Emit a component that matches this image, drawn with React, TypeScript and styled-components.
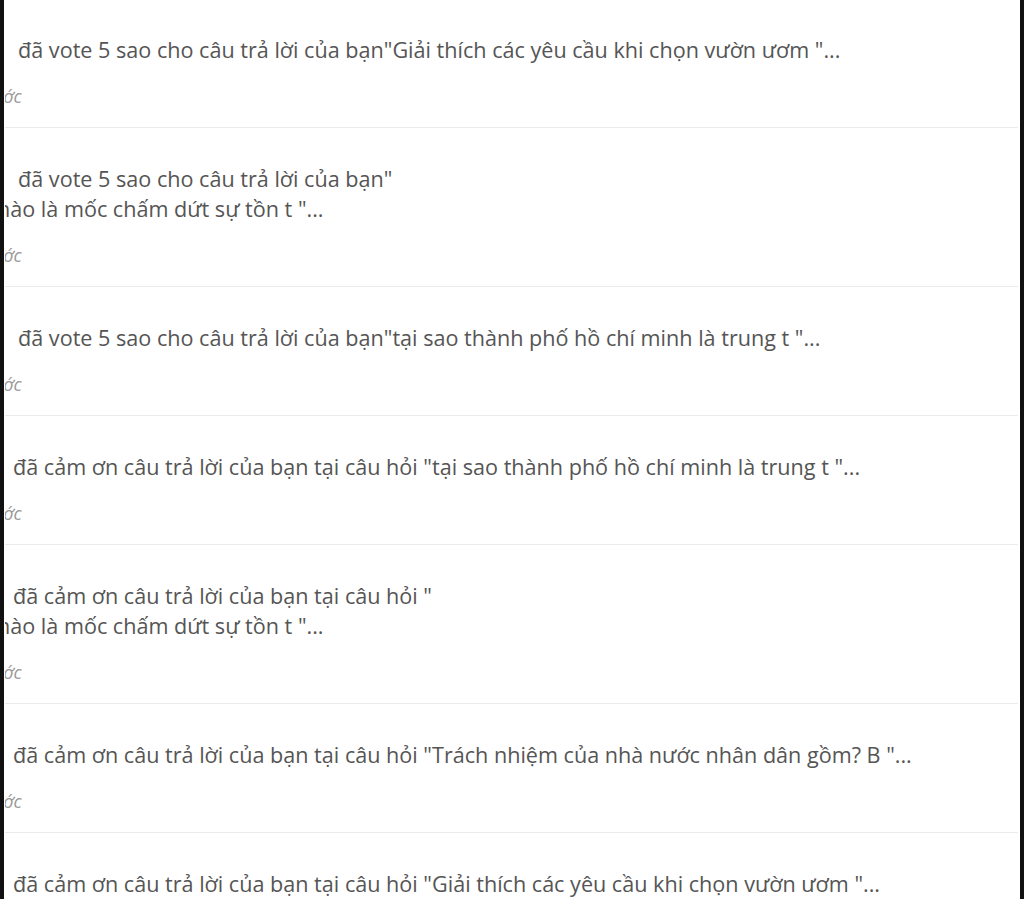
import React from "react";
import styled, { createGlobalStyle } from "styled-components";

const GlobalStyle = createGlobalStyle`
  html, body {
    margin: 0;
    padding: 0;
    background: #ffffff;
  }
  body {
    font-family: "Open Sans", "Noto Sans", sans-serif;
    overflow: hidden;
  }
`;

interface INotice {
  kind: "vote" | "thanks";
  question: string;
  breakLine?: boolean;
}

const notices: INotice[] = [
  { kind: "vote", question: "Giải thích các yêu cầu khi chọn vườn ươm " },
  { kind: "vote", question: "nào là mốc chấm dứt sự tồn t ", breakLine: true },
  { kind: "vote", question: "tại sao thành phố hồ chí minh là trung t " },
  { kind: "thanks", question: "tại sao thành phố hồ chí minh là trung t " },
  { kind: "thanks", question: "nào là mốc chấm dứt sự tồn t ", breakLine: true },
  { kind: "thanks", question: "Trách nhiệm của nhà nước nhân dân gồm? B " },
  { kind: "thanks", question: "Giải thích các yêu cầu khi chọn vườn ươm " },
];

const App = () => {
  return (
    <>
      <GlobalStyle />
      <Frame>
        <List>
          {notices.map((elem, idx) => (
            <Item key={idx}>
              <Message indent={elem.kind === "vote" ? 21 : 16}>
                {elem.kind === "vote"
                  ? 'đã vote 5 sao cho câu trả lời của bạn"'
                  : 'đã cảm ơn câu trả lời của bạn tại câu hỏi "'}
                {elem.breakLine && <br />}
                {elem.question}"...
              </Message>
              <Time>trước</Time>
            </Item>
          ))}
        </List>
      </Frame>
    </>
  );
};

export default App;

const Frame = styled.div`
  width: 1024px;
  height: 899px;
  box-sizing: border-box;
  border-left: 4px solid #111111;
  border-right: 4px solid #111111;
  background: #ffffff;
  overflow: hidden;
`;

const List = styled.ul`
  list-style: none;
  margin: -1px 0 0 0;
  padding: 0;
  overflow: hidden;
`;

const Item = styled.li`
  padding: 36px 0 19px 0;
  margin: 0 2px 0 1px;
  border-bottom: 1px solid #ebebeb;
  overflow: hidden;
`;

const Message = styled.p<{ indent: number }>`
  margin: 0 0 0 -8px;
  text-indent: ${(p) => p.indent}px;
  font-size: 21.6px;
  line-height: 30px;
  color: #555555;
  white-space: nowrap;
`;

const Time = styled.span`
  display: block;
  margin: 19px 0 0 -26px;
  font-size: 18px;
  line-height: 24px;
  font-style: italic;
  color: #9a9a9a;
`;
